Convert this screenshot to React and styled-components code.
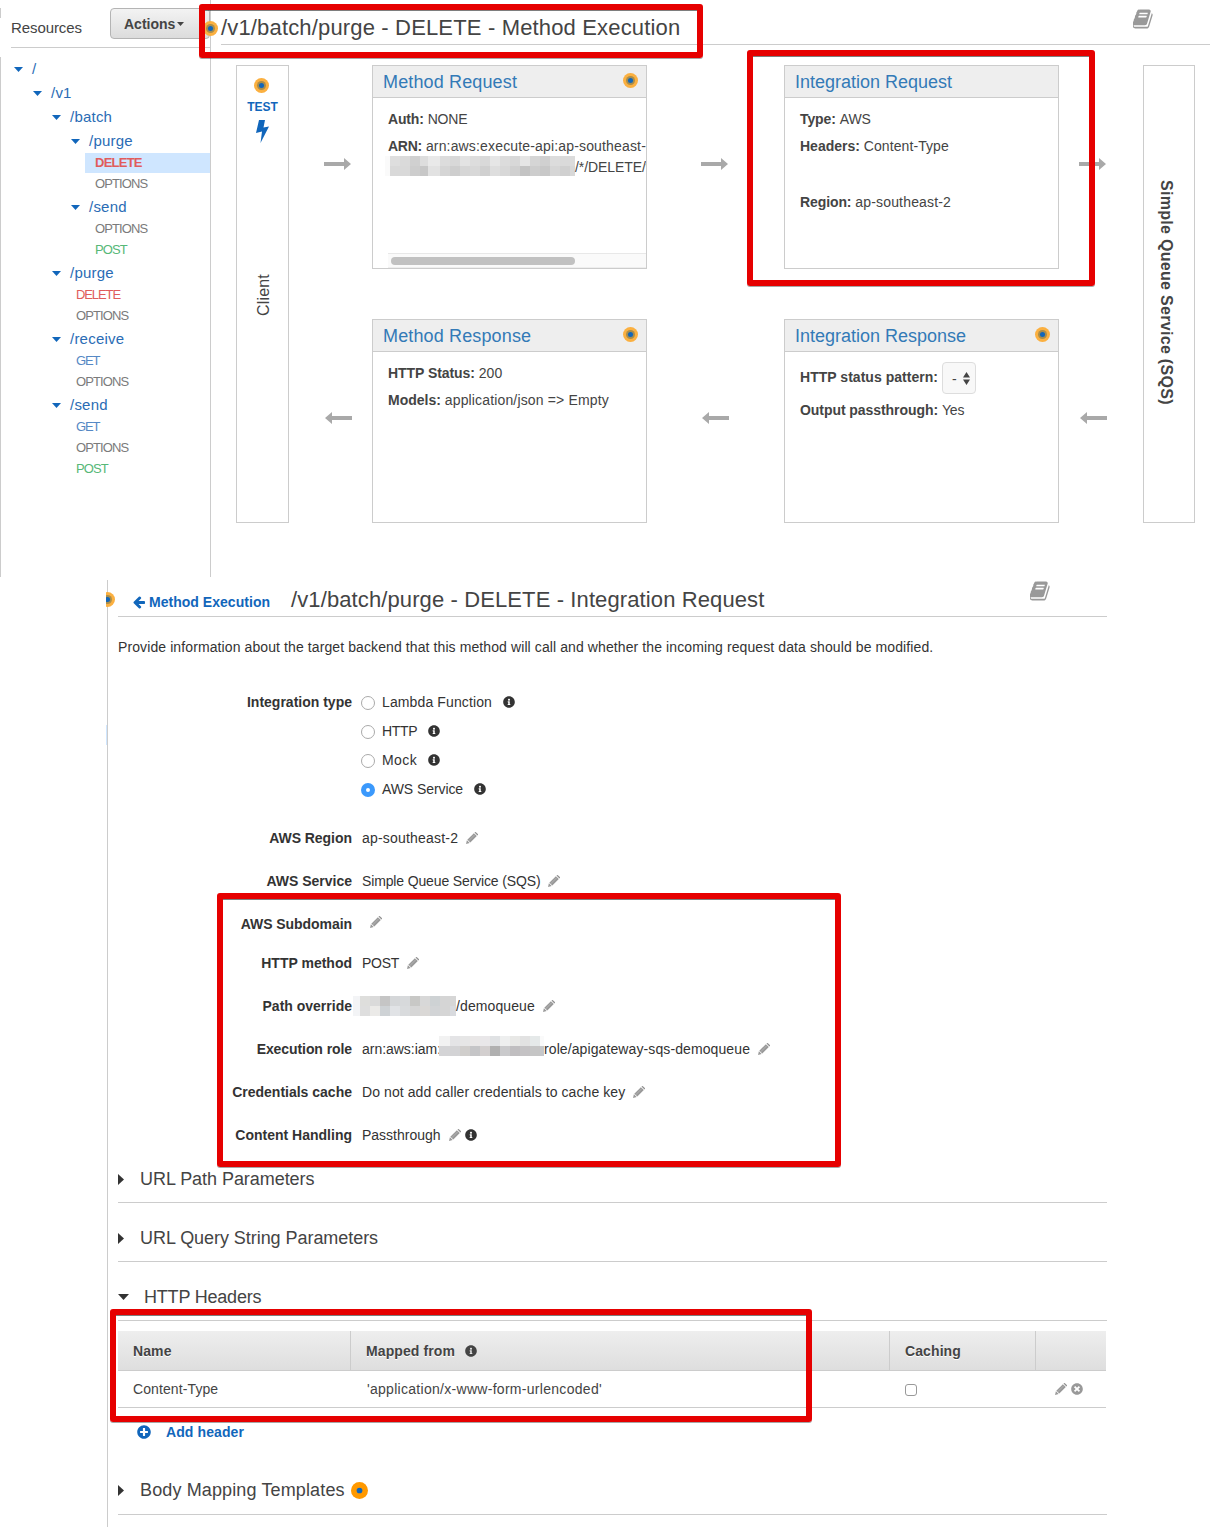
import React from 'react';
import styled, { createGlobalStyle } from 'styled-components';
import { FaInfoCircle, FaPlusCircle, FaTimesCircle } from 'react-icons/fa';

const Global = createGlobalStyle`
  *, *::before, *::after { box-sizing: border-box; }
  body { margin: 0; background: #fff; }
  body, button { font-family: "Liberation Sans", Arial, sans-serif; }
`;

const line = '#ccc';
const blue = '#1166bb';

const Page = styled.main`
  position: relative;
  width: 1219px;
  height: 1527px;
  overflow: hidden;
  font-size: 14px;
  line-height: 20px;
  color: #444;
`;

const T = styled.span`
  letter-spacing: ${p => p.$ls || 0}px;
  white-space: pre;
`;

/* ---------- shared marks ---------- */

const Highlight = styled.div`
  position: absolute;
  z-index: 5;
  left: ${p => p.$x}px;
  top: ${p => p.$y}px;
  width: ${p => p.$w}px;
  height: ${p => p.$h}px;
  border: 6px solid #e60000;
  border-radius: 3px;
  box-shadow: 0 1px 0 rgba(60, 60, 60, 0.45), inset 0 1px 0 rgba(40, 40, 40, 0.6);
  pointer-events: none;
`;

const DotSvg = styled.svg`
  display: block;
  flex: none;
`;

function Dot({ size = 15, solid }) {
  return (
    <DotSvg width={size} height={size} viewBox="0 0 16 16">
      <circle cx="8" cy="8" r="8" fill={solid ? '#ff9900' : '#fbb040'} />
      {!solid && <circle cx="8" cy="8" r="4.8" fill="#a98d4b" />}
      <circle cx="8" cy="8" r={2.7} fill="#1166bb" />
    </DotSvg>
  );
}

const MosaicGrid = styled.span`
  display: inline-grid;
  flex: none;
  grid-template-columns: ${p => p.$cols};
  grid-template-rows: repeat(2, 10px);
  vertical-align: top;
`;
const Cell = styled.i`
  background: ${p => p.$c};
`;
function Mosaic({ cols, cells }) {
  return (
    <MosaicGrid $cols={cols}>
      {cells.map((c, i) => <Cell key={i} $c={'#' + c} />)}
    </MosaicGrid>
  );
}

function Book() {
  return (
    <svg width="22" height="22" viewBox="64 0 1792 1792" fill="#999">
      <path d="M1639 478q40 57 18 129l-275 906q-19 64-76.5 107.5t-122.5 43.5h-923q-77 0-148.5-53.5t-99.5-131.5q-24-67-2-127 0-4 3-27t4-37q1-8-3-21.5t-3-19.5q2-11 8-21t16.5-23.5 16.5-23.5q23-38 45-91.5t30-91.5q3-10 .5-30t-.5-28q3-11 17-28t17-23q21-36 42-92t25-90q1-9-2.5-32t.5-28q4-13 22-30.5t22-22.5q19-26 42.5-84.5t27.5-96.5q1-8-3-25.5t-2-26.5q2-8 9-18t18-23 17-21q8-12 16.5-30.5t15-35 16-36 19.5-32 26.5-23.5 36-11.5 47.5 5.5l-1 3q38-9 51-9h761q74 0 114 56t18 130l-274 906q-36 119-71.5 153.5t-128.5 34.5h-869q-27 0-38 15-11 16-1 43 24 70 144 70h923q29 0 56-15.5t35-41.5l300-987q7-22 5-57 38 15 59 43zm-1064 2q-4 13 2 22.5t20 9.5h608q13 0 25.5-9.5t16.5-22.5l21-64q4-13-2-22.5t-20-9.5h-608q-13 0-25.5 9.5t-16.5 22.5zm-83 256q-4 13 2 22.5t20 9.5h608q13 0 25.5-9.5t16.5-22.5l21-64q4-13-2-22.5t-20-9.5h-608q-13 0-25.5 9.5t-16.5 22.5z" />
    </svg>
  );
}

function ArrowLeft() {
  return (
    <svg width="12" height="13" viewBox="128 128 1536 1664" fill={blue}>
      <path d="M1664 896v128q0 53-32.5 90.5t-84.5 37.5h-704l293 294q38 36 38 90t-38 90l-75 76q-37 37-90 37-52 0-91-37l-651-652q-37-37-37-90 0-52 37-91l651-650q38-38 91-38 52 0 90 38l75 74q38 38 38 91t-38 91l-293 293h704q52 0 84.5 37.5t32.5 90.5z" />
    </svg>
  );
}

/* ---------- resources sidebar ---------- */

const TopPanel = styled.section`
  display: flex;
  height: 577px;
`;

const Sidebar = styled.aside`
  width: 211px;
  flex: none;
  padding-top: 8px;
  border-right: 1px solid ${line};
  height: 577px;
`;

const SideHead = styled.div`
  height: 40px;
  margin-left: 11px;
  border-bottom: 1px solid ${line};
  display: flex;
  align-items: flex-start;
  justify-content: space-between;
  font-size: 15px;
`;
const SideTitle = styled.div`
  padding-top: 10px;
`;
const EdgeTick = styled.div`
  position: absolute;
  left: 0;
  top: 8px;
  width: 1px;
  height: 10px;
  background: ${line};
`;

const ActionsButton = styled.button`
  width: 100px;
  height: 31px;
  padding: 0 0 0 13px;
  display: flex;
  align-items: center;
  gap: 2px;
  border: 1px solid #b4b4b4;
  border-radius: 4px;
  background: linear-gradient(#f3f3f3, #dcdcdc);
  color: #444;
  font-weight: bold;
  font-size: 14px;
`;

const Tree = styled.div`
  margin-top: 9px;
  height: 520px;
  border-left: 1px solid ${line};
`;
const Resource = styled.div`
  height: 24px;
  padding-left: ${p => 13 + p.$depth * 19}px;
  display: flex;
  align-items: center;
  gap: 9px;
  font-size: 15px;
  color: #2a6cb5;
`;
const methodColors = { DELETE: '#e05c5c', OPTIONS: '#7b7b7b', POST: '#56b877', GET: '#5588c4' };
const Method = styled.div`
  height: ${p => (p.$active ? 20 : 21)}px;
  margin: 0 0 ${p => (p.$active ? 1 : 0)}px ${p => p.$depth * 19 + 8}px;
  padding-left: 10px;
  line-height: 19px;
  font-size: 13px;
  font-weight: ${p => (p.$active ? 'bold' : 'normal')};
  color: ${p => methodColors[p.$name]};
  background: ${p => (p.$active ? '#cfe6ff' : 'none')};
`;

const Caret = styled.svg`
  flex: none;
  display: block;
`;
const Down = ({ w = 9, h = 5, color = blue }) => (
  <Caret width={w} height={h} viewBox="0 0 10 5" preserveAspectRatio="none"><path d="M0 0h10L5 5z" fill={color} /></Caret>
);
const Right = () => (
  <Caret width="6" height="11" viewBox="0 0 6 11"><path d="M0 0l6 5.5L0 11z" fill="#333" /></Caret>
);

const tree = [
  ['/', 0], ['/v1', 1], ['/batch', 2], ['/purge', 3], ['DELETE', 4, true], ['OPTIONS', 4],
  ['/send', 3], ['OPTIONS', 4], ['POST', 4], ['/purge', 2], ['DELETE', 3], ['OPTIONS', 3],
  ['/receive', 2], ['GET', 3], ['OPTIONS', 3], ['/send', 2], ['GET', 3], ['OPTIONS', 3], ['POST', 3],
];
const methodSpacing = { DELETE: -1.1, OPTIONS: -0.9, POST: -0.9, GET: -1.1 };

/* ---------- method execution ---------- */

const Execution = styled.div`
  flex: 1;
  padding: 0 9px 0 10px;
`;
const ExecHead = styled.header`
  height: 45px;
  padding: 8px 55px 0 0;
  display: flex;
  justify-content: space-between;
  border-bottom: 1px solid ${line};
`;
const ExecTitle = styled.h1`
  margin: 5px 0 0 -18px;
  display: flex;
  align-items: center;
  height: 30px;
  gap: 3px;
  font-size: 22px;
  line-height: 30px;
  font-weight: normal;
  color: #444;
`;
const Diagram = styled.div`
  display: flex;
  margin: 20px 0 0 15px;
  height: 458px;
`;
const Endpoint = styled.div`
  width: ${p => p.$w}px;
  border: 1px solid ${line};
  display: flex;
  flex-direction: column;
  align-items: center;
`;
const Test = styled.div`
  display: flex;
  flex-direction: column;
  align-items: center;
  padding-top: 12px;
  height: 208px;
  font-size: 12px;
  font-weight: bold;
  color: ${blue};
`;
const TestDot = styled.div`
  margin-right: 2px;
`;
const TestLabel = styled.div`
  margin: 4px 0 3px;
`;
const ClientLabel = styled.div`
  writing-mode: vertical-rl;
  transform: rotate(180deg);
  font-size: 16px;
  margin-left: 2px;
`;
const ServiceLabel = styled.div`
  writing-mode: vertical-rl;
  margin: 114px 6px 0 0;
  font-size: 16px;
  font-weight: bold;
`;
const ArrowColumn = styled.div`
  width: ${p => p.$w}px;
  padding: 93px 0 0 ${p => p.$pad}px;
  display: flex;
  flex-direction: column;
  gap: 242px;
`;
const ArrowSvg = styled.svg`
  display: block;
  margin-left: ${p => (p.$left ? 1 : 0)}px;
  transform: ${p => (p.$left ? 'scaleX(-1)' : 'none')};
`;
const Arrow = ({ left }) => (
  <ArrowSvg $left={left} width="27" height="12" viewBox="0 0 27 12"><path d="M0 4h20V0l7 6-7 6V8H0z" fill="#a9a9a9" /></ArrowSvg>
);
const Arrows = ({ w, pad }) => (
  <ArrowColumn $w={w} $pad={pad}><Arrow /><Arrow left /></ArrowColumn>
);
const CardColumn = styled.div`
  width: 275px;
  display: flex;
  flex-direction: column;
  justify-content: space-between;
`;
const Card = styled.article`
  height: 204px;
  border: 1px solid ${line};
  overflow: hidden;
`;
const CardHead = styled.div`
  height: 32px;
  padding: 0 8px 0 10px;
  display: flex;
  justify-content: space-between;
  background: #eee;
  border-bottom: 1px solid ${line};
  font-size: 18px;
  line-height: 32px;
  letter-spacing: 0.1px;
  color: #337ab7;
`;
const DotSlot = styled.div`
  padding-top: 7px;
`;
const CardBody = styled.div`
  padding: 11px 0 0 15px;
`;
const Line = styled.div`
  height: 20px;
  margin-bottom: ${p => p.$gap ?? 7}px;
  white-space: nowrap;
  b { letter-spacing: ${p => p.$bls ?? -0.06}px; }
`;
const ArnRest = styled.div`
  display: flex;
  height: 20px;
  margin: -7px 0 0 -3px;
  line-height: 22px;
  white-space: nowrap;
`;
const ScrollTrack = styled.div`
  margin-top: 77px;
  height: 15px;
  border-top: 1px solid #e8e8e8;
  border-bottom: 1px solid #eee;
  background: #fafafa;
  padding: 3px;
`;
const ScrollThumb = styled.div`
  width: 184px;
  height: 8px;
  border-radius: 4px;
  background: #c1c1c1;
`;
const StatusLine = styled.div`
  display: flex;
  height: 32px;
  margin: -1px 0 6px;
  align-items: center;
  gap: 4px;
`;
const StatusLabel = styled.b`
  margin-bottom: 2px;
  letter-spacing: 0.03px;
`;
const Select = styled.div`
  width: 34px;
  height: 32px;
  padding: 1px 5px 0 9px;
  display: flex;
  align-items: center;
  justify-content: space-between;
  border: 1px solid #ddd;
  border-radius: 4px;
  background: #f8f8f8;
`;

/* ---------- integration request ---------- */

const Integration = styled.section`
  margin: 3px 0 0 106px;
  width: 1001px;
  height: 947px;
  overflow: hidden;
  display: flex;
  color: #333;
`;
const Rail = styled.div`
  width: 2px;
  flex: none;
  border-right: 1px solid ${line};
  padding-top: 145px;
`;
const RailMark = styled.div`
  height: 20px;
  background: #cfe6ff;
`;
const Content = styled.div`
  flex: 1;
  padding-left: 10px;
`;
const Head = styled.header`
  position: relative;
  height: 37px;
  border-bottom: 1px solid ${line};
  display: flex;
  align-items: flex-start;
  padding-left: 15px;
`;
const RailDot = styled.div`
  position: absolute;
  left: -18px;
  top: 12px;
`;
const Back = styled.a`
  display: flex;
  align-items: center;
  width: 158px;
  gap: 4px;
  padding-top: 12px;
  font-weight: bold;
  color: ${blue};
`;
const Title = styled.h1`
  margin: 5px auto 0 0;
  font-size: 22px;
  line-height: 30px;
  font-weight: normal;
  color: #444;
`;
const BookSlot = styled.div`
  padding-right: 55px;
`;
const Intro = styled.p`
  margin: 20px 0 35px;
`;
const Form = styled.div`
  height: 462px;
`;
const Row = styled.div`
  display: grid;
  grid-template-columns: 234px 1fr;
  column-gap: ${p => p.$gap ?? 10}px;
  height: 20px;
  margin-bottom: ${p => p.$mb ?? 23}px;
`;
const Label = styled.div`
  text-align: right;
  font-weight: bold;
  letter-spacing: ${p => p.$ls ?? 0}px;
`;
const Value = styled.div`
  display: flex;
  align-items: center;
  white-space: nowrap;
`;
const IconSlot = styled.span`
  display: flex;
  margin: ${p => p.$m || '0'};
`;
const RoleStart = styled.span`
  width: 77px;
`;
const Radio = styled.span`
  width: 14px;
  height: 14px;
  margin: 2px 7px 0 0;
  border-radius: 50%;
  border: ${p => (p.$on ? '5px solid #3b99fc' : '1px solid #aaa')};
  background: #fff;
`;
const Section = styled.div`
  height: ${p => p.$h || 59}px;
  padding-bottom: ${p => p.$pb || 13}px;
  border-bottom: 1px solid ${line};
  display: flex;
  align-items: flex-end;
  font-size: 18px;
  color: #444;
`;
const SectionInner = styled.div`
  display: flex;
  align-items: center;
  gap: ${p => p.$gap || 16}px;
  height: 20px;
`;
const Table = styled.div`
  margin: 10px 1px 0 0;
  color: #444;
`;
const tableCols = '233px 539px 146px 1fr';
const HeadRow = styled.div`
  display: grid;
  grid-template-columns: ${tableCols};
  height: 40px;
  background: linear-gradient(#eee, #dedede);
  border-bottom: 1px solid ${line};
  font-weight: bold;
  letter-spacing: 0.1px;
  text-shadow: 0 1px 0 #fff;
`;
const Th = styled.div`
  padding-left: 15px;
  display: flex;
  align-items: center;
  border-right: 1px solid ${line};
  &:last-child { border-right: 0; }
`;
const BodyRow = styled.div`
  display: grid;
  grid-template-columns: ${tableCols};
  height: 37px;
  border-bottom: 1px solid ${line};
`;
const Td = styled.div`
  padding-left: ${p => p.$pl || 15}px;
  display: flex;
  align-items: center;
`;
const Checkbox = styled.span`
  width: 12px;
  height: 12px;
  margin-top: 2px;
  border: 1px solid #999;
  border-radius: 3px;
`;
const Add = styled.a`
  display: flex;
  align-items: center;
  height: 20px;
  margin: 14px 0 0 19px;
  gap: 15px;
  font-weight: bold;
  color: ${blue};
`;

const Pencil = ({ m = '0 0 0 8px' }) => (
  <IconSlot $m={m}>
    <svg width="12" height="12" viewBox="0 0 12 12">
      <path d="M0 12L.9 8.300 3.700 11.100z" fill="#999" />
      <path d="M1.300 7.700L7.900 1.200l2.900 2.900-6.500 6.500z" fill="#999" />
      <path d="M8.500.6L8.900.2q.5-.4 1 0l1.900 1.900q.4.5 0 1l-.4.4z" fill="#8c8c8c" />
      <path d="M2.600 8.900L8.900 2.600" stroke="#c4c4c4" strokeWidth=".6" />
    </svg>
  </IconSlot>
);
const Info = ({ m, color = '#333' }) => <IconSlot $m={m}><FaInfoCircle size={12} color={color} /></IconSlot>;

const radios = [
  ['Lambda Function', 'Integration type', 0.12], ['HTTP', '', -0.3], ['Mock', '', 0.45], ['AWS Service', '', -0.08],
];

export default function App() {
  return (
    <Page>
      <Global />
      <TopPanel>
        <Sidebar>
          <EdgeTick />
          <SideHead>
            <SideTitle><T $ls={-0.08}>Resources</T></SideTitle>
            <ActionsButton><T>Actions</T><Down w={7} h={4} color="#444" /></ActionsButton>
          </SideHead>
          <Tree>
            {tree.map(([name, depth, active], i) =>
              name[0] === '/' ? (
                <Resource key={i} $depth={depth}><Down /><T $ls={0.22}>{name}</T></Resource>
              ) : (
                <Method key={i} $depth={depth} $active={active} $name={name}>
                  <T $ls={active ? -0.75 : methodSpacing[name]}>{name}</T>
                </Method>
              )
            )}
          </Tree>
        </Sidebar>

        <Execution>
          <ExecHead>
            <ExecTitle><Dot /><T $ls={0.16}>/v1/batch/purge - DELETE - Method Execution</T></ExecTitle>
            <Book />
          </ExecHead>
          <Diagram>
            <Endpoint $w={53}>
              <Test>
                <TestDot><Dot /></TestDot>
                <TestLabel><T>TEST</T></TestLabel>
                <svg width="13" height="23" viewBox="0 0 13 23"><path d="M3 0h6L7.500 7.500 13 6.500 4.500 23 6 11.500 0 13z" fill={blue} /></svg>
              </Test>
              <ClientLabel><T $ls={0.2}>Client</T></ClientLabel>
            </Endpoint>
            <Arrows w={83} pad={35} />
            <CardColumn>
              <Card>
                <CardHead><T $ls={0.14}>Method Request</T><DotSlot><Dot /></DotSlot></CardHead>
                <CardBody>
                  <Line $bls={-0.15}><b>Auth:</b> <T $ls={-0.2}>NONE</T></Line>
                  <Line $bls={-0.25}><b>ARN:</b> <T $ls={0.16}>arn:aws:execute-api:ap-southeast-</T></Line>
                  <ArnRest>
                    <Mosaic
                      cols="5px repeat(3, 10px) 8px 12px repeat(13, 10px) 5px"
                      cells={['fafafa', 'dedede', 'dadada', 'd0d0d0', 'ddd', 'e9e9e9', 'dcdcdc', 'd8d8d8', 'e3e3e3', 'ddd', 'd9d9d9', 'e6e6e6', 'dcdcdc', 'd8d8d8', 'e5e5e5', 'd5d5d5', 'd0d0d0', 'dcdcdc', 'dadada', 'dcdcdc',
                        'fafafa', 'd9d9d9', 'd9d9d9', 'cdcdcd', 'c7c7c7', 'e2e2e2', 'd5d5d5', 'cecece', 'd6d6d6', 'd8d8d8', 'd0d0d0', 'dedede', 'd8d8d8', 'd0d0d0', 'c3c3c3', 'cdcdcd', 'c8c8c8', 'd6d6d6', 'd0d0d0', 'd8d8d8']}
                    />
                    <T $ls={-0.08}>/*/DELETE/v</T>
                  </ArnRest>
                  <ScrollTrack><ScrollThumb /></ScrollTrack>
                </CardBody>
              </Card>
              <Card>
                <CardHead><T $ls={0.14}>Method Response</T><DotSlot><Dot /></DotSlot></CardHead>
                <CardBody>
                  <Line><b>HTTP Status:</b> 200</Line>
                  <Line $bls={0}><b>Models:</b> <T $ls={0.15}>application/json =&gt; Empty</T></Line>
                </CardBody>
              </Card>
            </CardColumn>
            <Arrows w={137} pad={54} />
            <CardColumn>
              <Card>
                <CardHead><T>Integration Request</T></CardHead>
                <CardBody>
                  <Line $bls={-0.1}><b>Type:</b> <T $ls={-0.1}>AWS</T></Line>
                  <Line $gap={36} $bls={0}><b>Headers:</b> <T $ls={0.08}>Content-Type</T></Line>
                  <Line $bls={-0.1}><b>Region:</b> <T $ls={0.17}>ap-southeast-2</T></Line>
                </CardBody>
              </Card>
              <Card>
                <CardHead><T>Integration Response</T><DotSlot><Dot /></DotSlot></CardHead>
                <CardBody>
                  <StatusLine>
                    <StatusLabel>HTTP status pattern:</StatusLabel>
                    <Select>
                      <span>-</span>
                      <svg width="7" height="13" viewBox="0 0 7 13" fill="#444"><path d="M3.500 0L7 5.500H0zM3.500 13L0 7.500h7z" /></svg>
                    </Select>
                  </StatusLine>
                  <Line $bls={-0.06}><b>Output passthrough:</b> <T $ls={-0.2}>Yes</T></Line>
                </CardBody>
              </Card>
            </CardColumn>
            <Arrows w={84} pad={20} />
            <Endpoint $w={52}>
              <ServiceLabel><T $ls={0.3}>Simple Queue Service (SQS)</T></ServiceLabel>
            </Endpoint>
          </Diagram>
        </Execution>
      </TopPanel>

      <Integration>
        <Rail><RailMark /></Rail>
        <Content>
          <Head>
            <RailDot><Dot /></RailDot>
            <Back><ArrowLeft /><T $ls={0.03}>Method Execution</T></Back>
            <Title><T $ls={0.11}>/v1/batch/purge - DELETE - Integration Request</T></Title>
            <BookSlot><Book /></BookSlot>
          </Head>
          <Intro><T $ls={0.1}>Provide information about the target backend that this method will call and whether the incoming request data should be modified.</T></Intro>
          <Form>
            {radios.map(([name, label, ls], i) => (
              <Row key={name} $gap={9} $mb={i === 3 ? 29 : 9}>
                <Label>{label}</Label>
                <Value><Radio $on={i === 3} /><T $ls={ls}>{name}</T><Info m="0 0 0 11px" /></Value>
              </Row>
            ))}
            <Row><Label $ls={-0.04}>AWS Region</Label><Value><T $ls={0.2}>ap-southeast-2</T><Pencil /></Value></Row>
            <Row><Label>AWS Service</Label><Value><T $ls={-0.14}>Simple Queue Service (SQS)</T><Pencil /></Value></Row>
            <Row $mb={19}><Label $ls={-0.06}>AWS Subdomain</Label><Value><Pencil m="-4px 0 0 8px" /></Value></Row>
            <Row><Label>HTTP method</Label><Value><T $ls={-0.3}>POST</T><Pencil /></Value></Row>
            <Row $gap={1}>
              <Label>Path override</Label>
              <Value>
                <Mosaic
                  cols="7px repeat(9, 10px) 6px"
                  cells={['f3f4f6', 'dededc', 'dadada', 'c5c5c5', 'd5d7d9', 'd7d9db', 'c8c8c6', 'd8d8d8', 'ced2d4', 'd5d5d5', 'd6d6d6',
                    'f3f4f6', 'dedede', 'ebeae8', 'ced2d5', 'e1e3e6', 'd9dbdd', 'd6d6d6', 'dad8d6', 'd2d4d6', 'd5d5d5', 'd8dade']}
                />
                <T $ls={0.1}>/demoqueue</T><Pencil />
              </Value>
            </Row>
            <Row>
              <Label $ls={-0.08}>Execution role</Label>
              <Value>
                <RoleStart><T $ls={-0.03}>arn:aws:iam:</T></RoleStart>
                <IconSlot $m="-6px 0 0 0">
                  <Mosaic
                    cols="11px repeat(9, 10px) 4px"
                    cells={['f2f2f2', 'e4e4e6', 'e6e6e6', 'e9e7e7', 'e9e7e9', 'e0e2e4', 'eeefef', 'e8e8e6', 'e2e2e2', 'e5e9e9', 'fafafa',
                      'd4d4d6', 'd3d3d5', 'd0cecc', 'c5c5c7', 'd3cfcf', 'b0b0b0', 'cacacc', 'c0bec0', 'c4c2c4', 'c5c5c5', 'c5c7ca']}
                  />
                </IconSlot>
                <T $ls={0.1}>role/apigateway-sqs-demoqueue</T><Pencil />
              </Value>
            </Row>
            <Row><Label>Credentials cache</Label><Value><T $ls={0.08}>Do not add caller credentials to cache key</T><Pencil /></Value></Row>
            <Row><Label>Content Handling</Label><Value><T>Passthrough</T><Pencil /><Info m="0 0 0 4px" /></Value></Row>
          </Form>
          <Section $h={49}><SectionInner><Right /><T $ls={-0.05}>URL Path Parameters</T></SectionInner></Section>
          <Section><SectionInner><Right /><T $ls={-0.05}>URL Query String Parameters</T></SectionInner></Section>
          <Section><SectionInner $gap={15}><Down w={11} h={6} color="#333" /><T $ls={-0.2}>HTTP Headers</T></SectionInner></Section>
          <Table>
            <HeadRow><Th>Name</Th><Th>Mapped from<Info m="0 0 0 10px" color="#444" /></Th><Th>Caching</Th><Th /></HeadRow>
            <BodyRow>
              <Td><T $ls={0.1}>Content-Type</T></Td>
              <Td $pl={16}><T $ls={0.29}>'application/x-www-form-urlencoded'</T></Td>
              <Td><Checkbox /></Td>
              <Td $pl={19}><Pencil m="0 4px 0 0" /><FaTimesCircle size={12} color="#999" /></Td>
            </BodyRow>
          </Table>
          <Add><FaPlusCircle size={14} /><T $ls={0.1}>Add header</T></Add>
          <Section $h={73} $pb={14}><SectionInner><Right /><T $ls={0.13}>Body Mapping Templates</T><IconSlot $m="0 0 0 -10px"><Dot size={17} solid /></IconSlot></SectionInner></Section>
        </Content>
      </Integration>

      <Highlight $x={199} $y={4} $w={504} $h={54} />
      <Highlight $x={747} $y={50} $w={348} $h={236} />
      <Highlight $x={217} $y={893} $w={624} $h={274} />
      <Highlight $x={110} $y={1309} $w={702} $h={113} />
    </Page>
  );
}
